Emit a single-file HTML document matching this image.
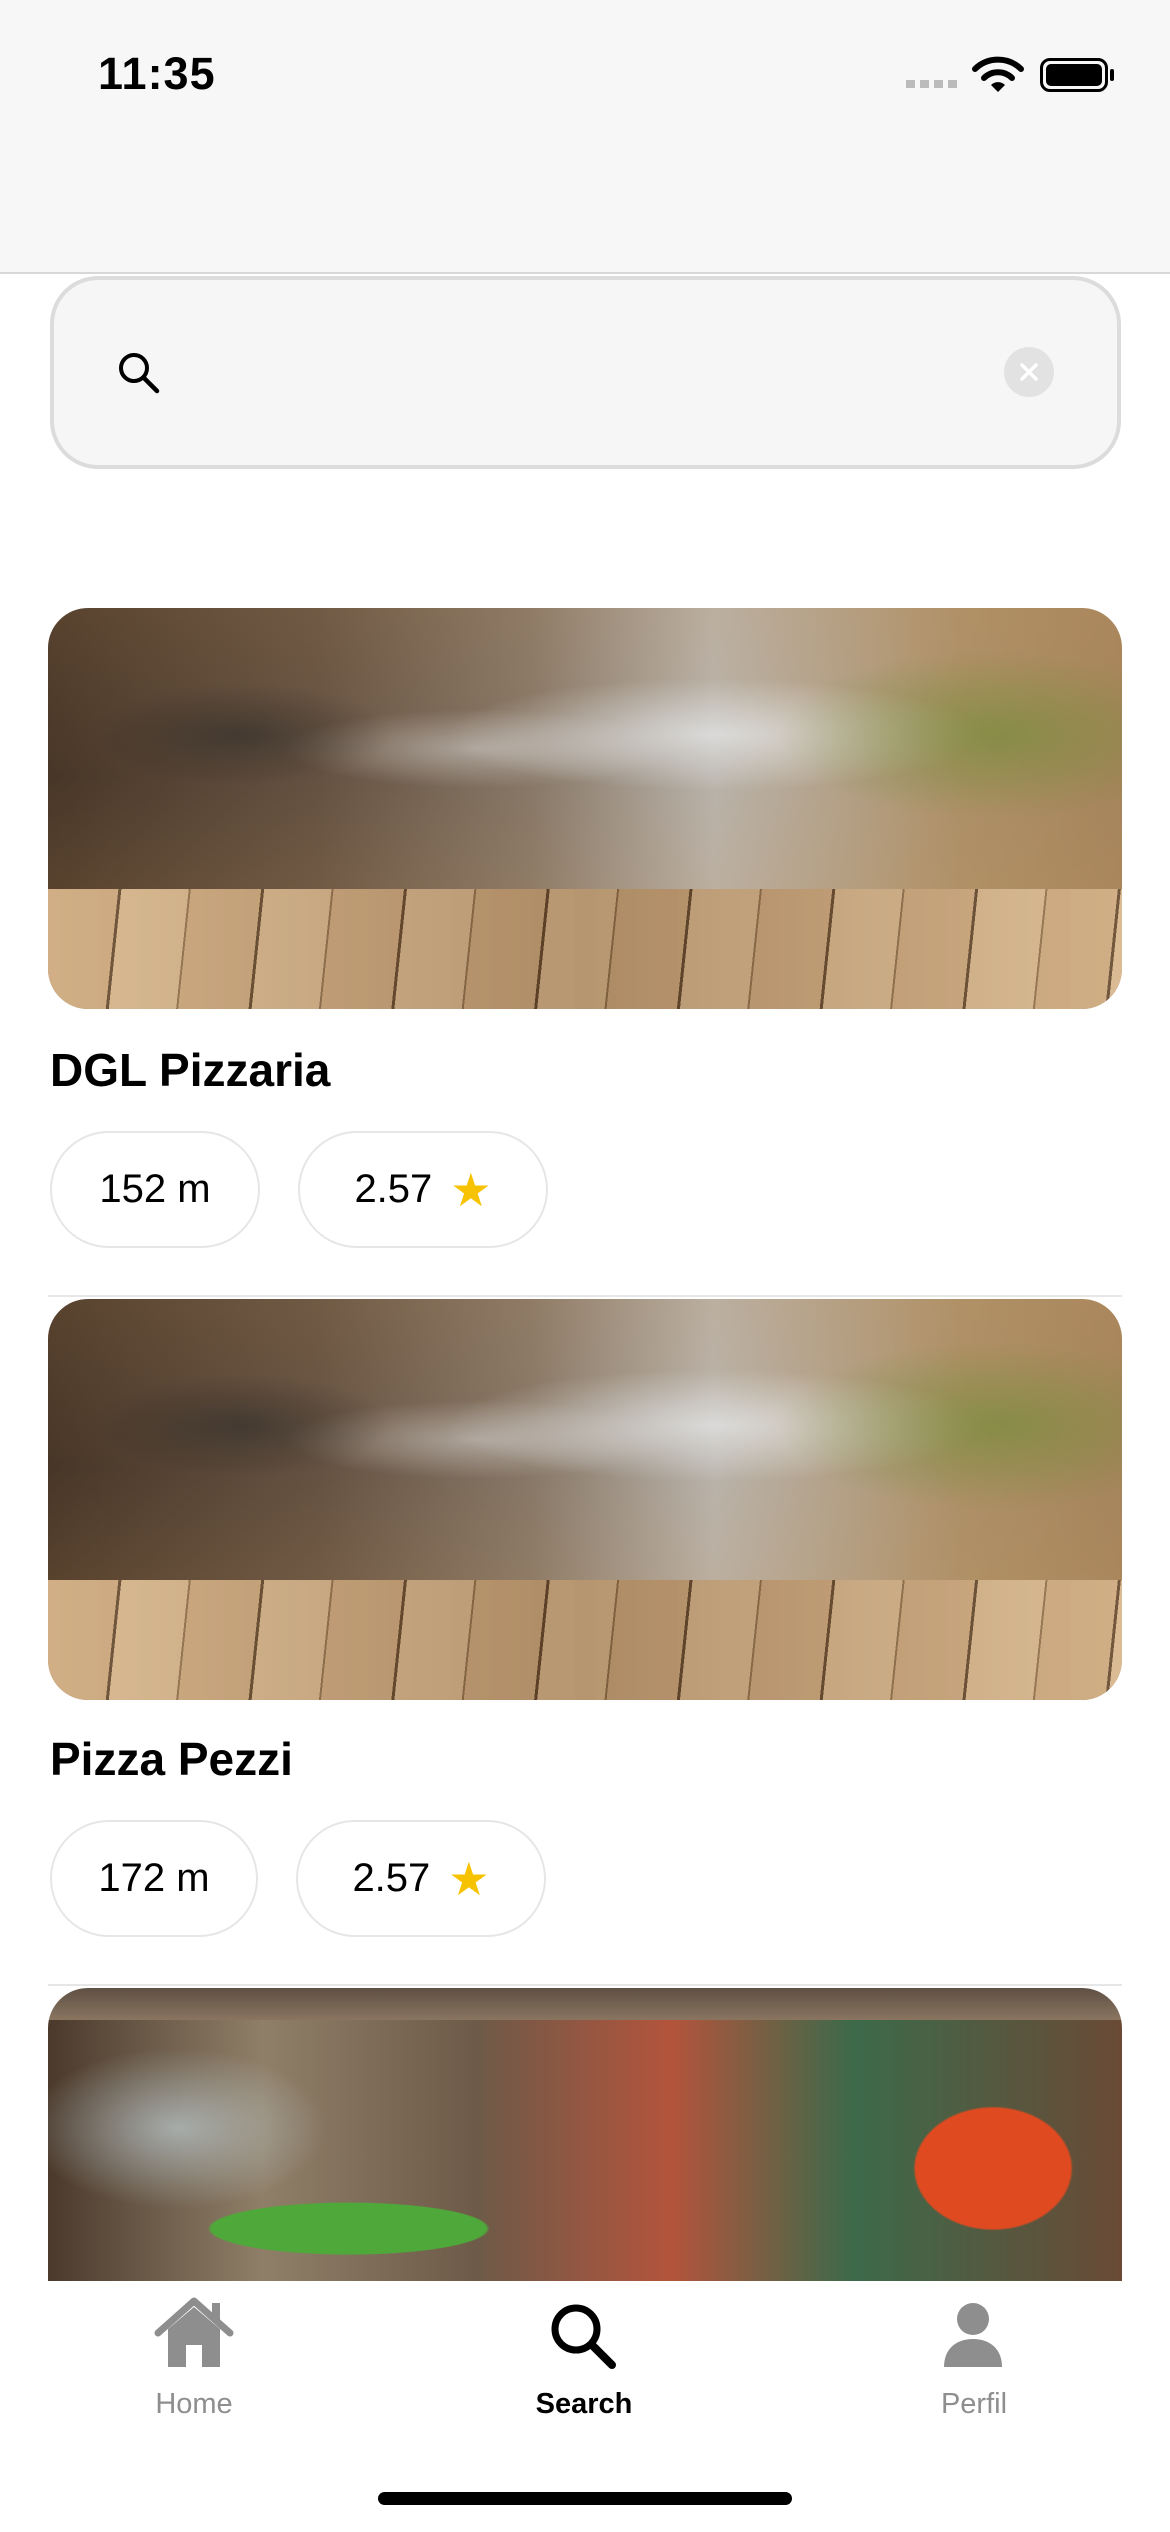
<!DOCTYPE html>
<html><head><meta charset="utf-8">
<style>
*{margin:0;padding:0;box-sizing:border-box}
body{width:1170px;height:2532px;overflow:hidden;background:#fff;font-family:"Liberation Sans",sans-serif;position:relative;color:#000}
.status{position:absolute;left:0;top:0;width:1170px;height:274px;background:#f7f7f7;border-bottom:2px solid #d8d8d8}
.time{position:absolute;left:98px;top:48px;font-size:45px;font-weight:700;letter-spacing:1px}
.search{position:absolute;left:50px;top:276px;width:1071px;height:193px;border:4px solid #dcdcdc;border-radius:48px;background:#f6f6f6}
.img{position:absolute;left:48px;width:1074px;height:401px;border-radius:40px;overflow:hidden}
.rest .top{position:absolute;left:0;top:0;width:100%;height:70%;
 background:radial-gradient(ellipse 14% 18% at 18% 45%,rgba(40,40,40,.5),transparent),
 radial-gradient(ellipse 18% 14% at 40% 50%,rgba(230,230,230,.45),transparent),
 radial-gradient(ellipse 20% 30% at 88% 45%,rgba(110,140,50,.6),transparent),
 radial-gradient(ellipse 25% 20% at 62% 45%,rgba(240,245,250,.6),transparent),
 linear-gradient(180deg,rgba(120,90,60,.3),rgba(60,45,35,.2) 60%,rgba(120,90,60,.3)),
 linear-gradient(90deg,#4a3828 0%,#6e5a48 25%,#9a8a78 45%,#d8d4cc 62%,#c9a878 85%,#c09a6a 100%);}
.rest .wood{position:absolute;left:0;top:70%;width:100%;height:30%;
 background:linear-gradient(90deg,rgba(255,230,190,.15),rgba(90,60,30,.25) 50%,rgba(255,230,190,.15)),
 repeating-linear-gradient(96deg,#c9a57c 0 70px,#5a4028 70px 73px,#d4b48c 73px 140px,#8a6a48 140px 142px),linear-gradient(#c8a57e,#a88460);}
.title{position:absolute;left:50px;font-size:46px;font-weight:700}
.chip{position:absolute;height:117px;border:2px solid #e6e6e6;border-radius:60px;font-size:40px;display:flex;align-items:center;justify-content:center}
.sep{position:absolute;left:48px;width:1074px;height:2px;background:#e6e6e6}
.play{background:
 linear-gradient(180deg,#5e5044 0%,#8a7560 8%,transparent 8%),
 radial-gradient(ellipse 12% 25% at 88% 45%,#e04a20 0,#e04a20 60%,transparent 62%),
 radial-gradient(ellipse 18% 14% at 30% 92%,#2aa8d8 0,#2aa8d8 80%,transparent 82%),
 radial-gradient(ellipse 16% 8% at 28% 60%,#4fa83a 0,#4fa83a 80%,transparent 82%),
 radial-gradient(ellipse 14% 20% at 12% 35%,rgba(200,220,230,.6),transparent),
 linear-gradient(90deg,#4b3a2c 0%,#8f7f68 20%,#6d5a48 40%,#b3543c 58%,#3c6a4a 75%,#6a4a36 100%);}
.tab{position:absolute;left:0;top:2281px;width:1170px;height:251px;background:#fff}
.lbl{position:absolute;top:2388px;font-size:29px;transform:translateX(-50%)}
.ind{position:absolute;left:378px;top:2492px;width:414px;height:13px;border-radius:7px;background:#000}
</style></head><body>
<div class="status">
 <div class="time">11:35</div>
 <div style="position:absolute;left:906px;top:80px;width:52px;height:8px;background:repeating-linear-gradient(90deg,#bbb 0 9px,transparent 9px 14px)"></div>
 <svg style="position:absolute;left:972px;top:56px" width="52" height="38" viewBox="0 0 52 38"><path d="M3 13 A33 33 0 0 1 49 13" stroke="#000" stroke-width="6" fill="none" stroke-linecap="round"/><path d="M12 22 A20 20 0 0 1 40 22" stroke="#000" stroke-width="6" fill="none" stroke-linecap="round"/><path d="M26 36 L19 29 A10 10 0 0 1 33 29 Z" fill="#000"/></svg>
 <div style="position:absolute;left:1040px;top:58px;width:68px;height:34px;border:3px solid #000;border-radius:10px;padding:3px"><div style="width:100%;height:100%;background:#000;border-radius:5px"></div></div>
 <div style="position:absolute;left:1110px;top:69px;width:4px;height:12px;background:#000;border-radius:2px"></div>
</div>
<div class="search">
 <svg style="position:absolute;left:62px;top:70px" width="46" height="46" viewBox="0 0 46 46"><circle cx="18" cy="18" r="13" stroke="#000" stroke-width="4" fill="none"/><path d="M28 28 L41 41" stroke="#000" stroke-width="4.5" stroke-linecap="round"/></svg>
 <div style="position:absolute;left:950px;top:67px;width:50px;height:50px;border-radius:50%;background:#e2e2e2"></div>
 <svg style="position:absolute;left:950px;top:67px" width="50" height="50"><path d="M18 18 L32 32 M32 18 L18 32" stroke="#fff" stroke-width="3.5" stroke-linecap="round"/></svg>
</div>

<div class="img rest" style="top:608px"><div class="top"></div><div class="wood"></div></div>
<div class="title" style="top:1043px">DGL Pizzaria</div>
<div class="chip" style="left:50px;top:1131px;width:210px">152 m</div>
<div class="chip" style="left:298px;top:1131px;width:250px">2.57 <span style="color:#f7c300;margin-left:18px;font-size:46px">★</span></div>
<div class="sep" style="top:1295px"></div>

<div class="img rest" style="top:1299px"><div class="top"></div><div class="wood"></div></div>
<div class="title" style="top:1732px">Pizza Pezzi</div>
<div class="chip" style="left:50px;top:1820px;width:208px">172 m</div>
<div class="chip" style="left:296px;top:1820px;width:250px">2.57 <span style="color:#f7c300;margin-left:18px;font-size:46px">★</span></div>
<div class="sep" style="top:1984px"></div>

<div class="img play" style="top:1988px;height:401px"></div>

<div class="tab">
 <svg style="position:absolute;left:152px;top:14px" width="84" height="76" viewBox="0 0 84 76"><path d="M6 38 L42 6 L78 38" stroke="#8e8e8e" stroke-width="7" fill="none" stroke-linecap="round" stroke-linejoin="round"/><path d="M16 34 L42 12 L68 34 V72 H50 V50 H34 V72 H16 Z" fill="#8e8e8e"/><rect x="60" y="8" width="8" height="18" fill="#8e8e8e"/></svg>
 <svg style="position:absolute;left:548px;top:20px" width="70" height="70" viewBox="0 0 70 70"><circle cx="28" cy="28" r="21" stroke="#000" stroke-width="7" fill="none"/><path d="M44 44 L64 64" stroke="#000" stroke-width="8" stroke-linecap="round"/></svg>
 <svg style="position:absolute;left:942px;top:20px" width="62" height="68" viewBox="0 0 62 68"><circle cx="31" cy="18" r="16" fill="#8e8e8e"/><path d="M2 66 C2 48 14 38 31 38 C48 38 60 48 60 66 Z" fill="#8e8e8e"/></svg>
</div>
<div class="lbl" style="left:194px;color:#8e8e8e">Home</div>
<div class="lbl" style="left:584px;color:#000;font-weight:600">Search</div>
<div class="lbl" style="left:974px;color:#8e8e8e">Perfil</div>
<div class="ind"></div>
</body></html>
